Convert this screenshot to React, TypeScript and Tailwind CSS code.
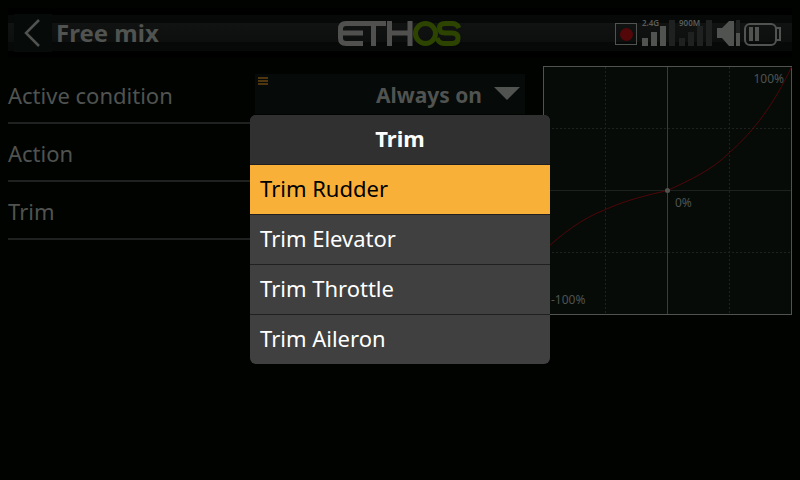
import React from "react";

const font = "font-['Noto_Sans','Open_Sans',sans-serif]";

function Logo() {
  return (
    <svg width="124" height="27" viewBox="1 0 124 27" fill="none" strokeWidth="5" role="img" aria-label="ETHOS">
      <g stroke="#50514f">
        <path d="M49 3.500H9Q3.500 3.500 3.500 9V18Q3.500 23.500 9 23.500H26M3.500 13H26M36.500 3.500V26" />
        <path d="M52.500 1V26M73 1V26M52.500 13H73" />
      </g>
      <g stroke="#2c4400">
        <circle cx="88.500" cy="13.500" r="10" />
        <path d="M122 8Q120 3.500 115 3.500H108Q102.500 3.500 102.500 8Q102.500 13 108 13H115Q121 13 121 18Q121 23.500 115 23.500H107Q102 23.500 100 18" />
      </g>
    </svg>
  );
}

function StatusIcons() {
  return (
    <svg width="169" height="36" viewBox="615 15 169 36" className={font} role="img" aria-label="Radio status">
      <rect x="615.500" y="23.500" width="21" height="21" fill="none" stroke="#505350" />
      <circle cx="626.500" cy="34.500" r="6.500" fill="#530709" />
      <g fill="#505350">
        <path d="M642 38h6v8h-6zM651 32h6v14h-6zM660 26h6v20h-6z" />
        <path d="M717 28h5l7-7h5v25h-5l-7-8h-5zM736 33h4v13h-4zM749 27h4v14h-4zM755 27h4v14h-4z" />
      </g>
      <path
        fill="#1e211f"
        d="M669 20h6v26h-6zM679 38h6v8h-6zM688 32h6v14h-6zM697 26h6v20h-6zM706 20h6v26h-6zM736 20h4v13h-4z"
      />
      <rect x="745" y="24" width="31" height="21" rx="5" fill="none" stroke="#505350" strokeWidth="2" />
      <path d="M776 28h4v12h-4" fill="none" stroke="#505350" strokeWidth="2" />
      <text x="642" y="26" fontSize="8" fontWeight="600" fill="#5a5d5a">2.4G</text>
      <text x="679" y="26" fontSize="8" fontWeight="600" fill="#5a5d5a">900M</text>
    </svg>
  );
}

function Header() {
  return (
    <header className="grid h-[50px] grid-cols-[1fr_auto_1fr] items-center bg-[linear-gradient(#000,#000_7px,#060908_7px,#060908_15px,#111312_15px,#0d0f0e_34px,#060908_34px,#060908_43px,#000_43px)]">
      <div className="flex items-center">
        <button aria-label="Back" className="ml-1.5 flex h-[38px] w-[38px] items-center justify-center bg-[#060a08]">
          <svg width="18" height="28" viewBox="0 0 18 28" fill="none" stroke="#505350" strokeWidth="2.500">
            <path d="M15 1L2 14L15 27" />
          </svg>
        </button>
        <h1 className="ml-1 text-2xl font-bold">Free mix</h1>
      </div>
      <Logo />
      <div className="flex justify-end pr-2">
        <StatusIcons />
      </div>
    </header>
  );
}

function CurveChart() {
  return (
    <svg viewBox="543 66 249 249" className="h-[249px] w-full" role="img" aria-label="Mix curve">
      <rect x="543.500" y="66.500" width="248" height="248" fill="#060b08" stroke="#505350" />
      <path d="M605.500 67V314M729.500 67V314M544 128.500H791M544 252.500H791" stroke="#1e211f" strokeDasharray="2 2" />
      <path d="M544 190.500H791" stroke="#1e211f" />
      <path d="M667.500 67V314" stroke="#503811" />
      <path
        d="M543 252C561 234 583 218 605.500 209.500C626 200 648 195 667.500 190.500C690 180 712 170 729.500 152.500C754 131 774 104 791.500 67"
        fill="none"
        stroke="#500507"
      />
      <circle cx="667.500" cy="190.500" r="2.500" fill="#505350" />
      <g className={font} fontSize="12" fill="#505350">
        <text x="784" y="83" textAnchor="end">100%</text>
        <text x="675" y="207">0%</text>
        <text x="551" y="304">-100%</text>
      </g>
    </svg>
  );
}

function MixForm() {
  return (
    <form className="flex-1">
      <div className="flex h-[58px] items-center justify-between border-b-2 border-[#1e211f]">
        <label htmlFor="condition" className="pt-0.5">
          Active condition
        </label>
        <div className="relative">
          <select
            id="condition"
            className="h-10 w-[270px] appearance-none bg-[#060a08] pt-0.5 pr-[43px] text-[21px] font-bold [text-align-last:right]"
          >
            <option>Always on</option>
          </select>
          <svg width="10" height="8" className="absolute left-[3px] top-[3px]" fill="#50360f" aria-hidden="true">
            <path d="M0 0h10v2H0zM0 3h10v2H0zM0 6h10v2H0z" />
          </svg>
          <svg width="26" height="13" className="absolute right-[5px] top-[13px]" fill="#505350" aria-hidden="true">
            <path d="M0 0H26L13 13z" />
          </svg>
        </div>
      </div>
      <div className="flex h-[58px] items-center border-b-2 border-[#1e211f] pt-0.5">Action</div>
      <div className="flex h-[58px] items-center border-b-2 border-[#1e211f] pt-0.5">Trim</div>
    </form>
  );
}

const trims = ["Trim Rudder", "Trim Elevator", "Trim Throttle", "Trim Aileron"];

function TrimMenu() {
  const [selected, setSelected] = React.useState(trims[0]);
  return (
    <div className="absolute inset-0 flex items-center justify-center pb-0.5">
      <section
        role="dialog"
        aria-labelledby="trim-title"
        className="w-[300px] overflow-hidden rounded-md bg-[#404040] text-white"
      >
        <h2 id="trim-title" className="flex h-[49px] items-center justify-center bg-[#303030] pb-0.5 font-bold">
          Trim
        </h2>
        <ul>
          {trims.map((trim) => (
            <li key={trim} className="border-t border-[#202020]">
              <button
                aria-pressed={trim === selected}
                onClick={() => setSelected(trim)}
                className="flex h-[49px] w-full items-center px-2.5 pb-0.5 aria-pressed:bg-[#f8b038] aria-pressed:text-black"
              >
                {trim}
              </button>
            </li>
          ))}
        </ul>
      </section>
    </div>
  );
}

export default function App() {
  return (
    <div className={`relative min-h-screen bg-[#000300] p-2 text-[22px] leading-7 text-[#505350] ${font}`}>
      <Header />
      <main className="mt-2 flex items-start gap-[18px]">
        <MixForm />
        <div className="w-[249px]">
          <CurveChart />
        </div>
      </main>
      <TrimMenu />
    </div>
  );
}
